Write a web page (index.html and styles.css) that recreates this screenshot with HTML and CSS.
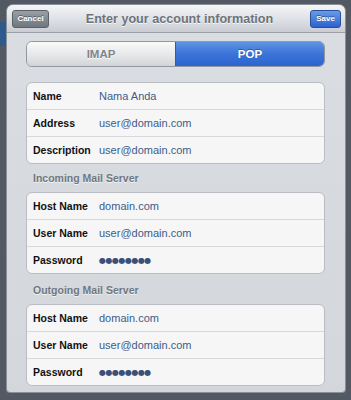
FILE: index.html
```html
<!DOCTYPE html>
<html lang="en">
<head>
    <meta charset="UTF-8">
    <meta name="viewport" content="width=device-width, initial-scale=1.0">
    <title>Enter your account information</title>
    <link rel="stylesheet" href="styles.css">
</head>
<body>
    <div class="backdrop-tab"></div>

    <div class="sheet">
        <div class="topbar">
            <button class="bar-btn cancel">Cancel</button>
            <div class="title">Enter your account information</div>
            <button class="bar-btn save">Save</button>
        </div>

        <div class="content">
            <div class="segmented">
                <div class="seg">IMAP</div>
                <div class="seg active">POP</div>
            </div>

            <div class="group first">
                <div class="row"><span class="label">Name</span><span class="value">Nama Anda</span></div>
                <div class="row"><span class="label">Address</span><span class="value">user@domain.com</span></div>
                <div class="row"><span class="label">Description</span><span class="value">user@domain.com</span></div>
            </div>

            <div class="section-title">Incoming Mail Server</div>
            <div class="group">
                <div class="row"><span class="label">Host Name</span><span class="value">domain.com</span></div>
                <div class="row"><span class="label">User Name</span><span class="value">user@domain.com</span></div>
                <div class="row"><span class="label">Password</span><span class="value dots">●●●●●●●●</span></div>
            </div>

            <div class="section-title outgoing">Outgoing Mail Server</div>
            <div class="group">
                <div class="row"><span class="label">Host Name</span><span class="value">domain.com</span></div>
                <div class="row"><span class="label">User Name</span><span class="value">user@domain.com</span></div>
                <div class="row"><span class="label">Password</span><span class="value dots">●●●●●●●●</span></div>
            </div>
        </div>
    </div>
</body>
</html>
```

FILE: styles.css
```css
* {
    margin: 0;
    padding: 0;
    box-sizing: border-box;
}

body {
    font-family: 'Liberation Sans', Arial, sans-serif;
    background: #525962;
    width: 351px;
    height: 400px;
    overflow: hidden;
    position: relative;
}

/* bit of the page behind the sheet */
.backdrop-tab {
    position: absolute;
    left: 0;
    top: 22px;
    width: 8px;
    height: 24px;
    background: #2f5a8c;
}

.sheet {
    position: relative;
    margin: 5px 6px 0 7px;
    height: 387px;
    background: linear-gradient(#dadde1, #d3d6db);
    border-radius: 6px 6px 3px 3px;
    overflow: hidden;
    box-shadow: 0 0 0 1px #8a9098;
}

.topbar {
    height: 28px;
    display: flex;
    align-items: center;
    justify-content: space-between;
    padding: 0 4px 0 5px;
    background: linear-gradient(#f4f5f7, #dfe2e6 50%, #c9cdd3);
    border-bottom: 1px solid #9aa0a8;
}

.bar-btn {
    height: 18px;
    border-radius: 3px;
    color: white;
    font-family: 'Liberation Sans', Arial, sans-serif;
    font-size: 8px;
    font-weight: bold;
    text-shadow: 0 -1px 0 rgba(0,0,0,0.4);
}

.cancel {
    width: 37px;
    background: linear-gradient(#9a9fa6, #70767e);
    border: 1px solid #5c6168;
}

.save {
    width: 31px;
    background: linear-gradient(#6a9be6, #2a62d0);
    border: 1px solid #2a4f9a;
}

.title {
    flex: 1;
    text-align: center;
    font-size: 12.6px;
    font-weight: bold;
    color: #6d737b;
    text-shadow: 0 1px 0 rgba(255,255,255,0.8);
}

.content {
    padding: 8px 20px 0 19px;
}

.segmented {
    display: flex;
    height: 26px;
    border: 1px solid #9298a0;
    border-radius: 6px;
    overflow: hidden;
}

.seg {
    flex: 1;
    display: flex;
    align-items: center;
    justify-content: center;
    font-size: 11.5px;
    font-weight: bold;
    color: #80858b;
    background: linear-gradient(#fafafa, #e6e7e9 55%, #d2d4d7);
    text-shadow: 0 1px 0 white;
}

.seg.active {
    color: white;
    background: linear-gradient(#5f93e4, #3b73d8 50%, #2c64cf);
    text-shadow: 0 -1px 0 rgba(0,0,0,0.3);
    border-left: 1px solid #2d5cae;
}

.group {
    background: #f6f6f7;
    border: 1px solid #b9bdc3;
    border-radius: 6px;
}

.group.first {
    margin-top: 15px;
}

.row {
    display: flex;
    align-items: center;
    height: 27px;
    padding-left: 6px;
    border-top: 1px solid #d6d8db;
}

.row:first-child {
    border-top: none;
    height: 26px;
}

.label {
    width: 66px;
    font-size: 10.5px;
    font-weight: bold;
    color: #111;
}

.value {
    font-size: 11px;
    color: #3d5c88;
}

.dots {
    font-family: 'DejaVu Sans', sans-serif;
    font-size: 8px;
    letter-spacing: -0.5px;
    color: #3b4f7a;
}

.section-title {
    height: 28px;
    line-height: 29px;
    padding-left: 7px;
    font-size: 10.5px;
    font-weight: bold;
    color: #6f7780;
    text-shadow: 0 1px 0 rgba(255,255,255,0.7);
}

.section-title.outgoing {
    height: 30px;
    line-height: 33px;
}
```
